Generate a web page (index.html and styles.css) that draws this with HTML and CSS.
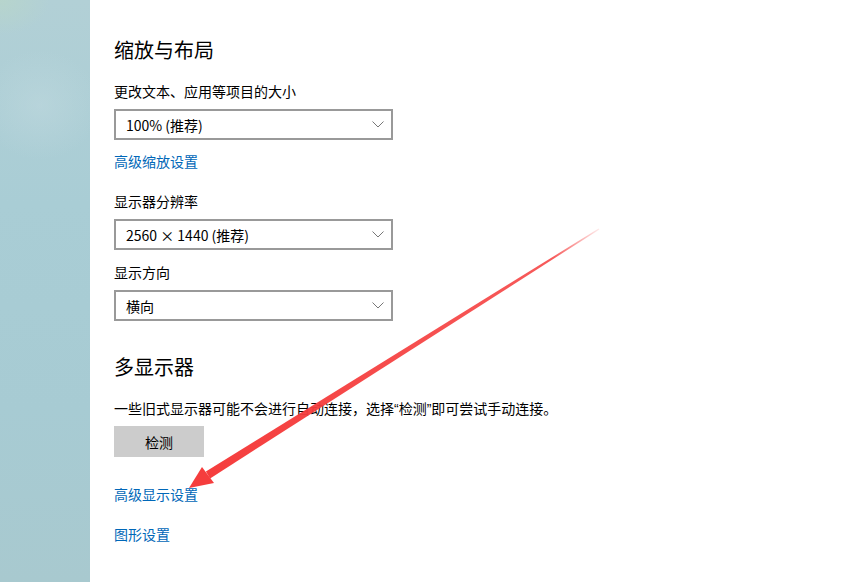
FILE: index.html
```html
<!DOCTYPE html>
<html lang="zh-CN">
<head>
<meta charset="utf-8">
<title>显示设置</title>
<link rel="stylesheet" href="styles.css">
</head>
<body>
<div class="window">
  <aside class="sidebar"></aside>
  <main class="content">
    <h2 class="heading">缩放与布局</h2>
    <div class="label first-label">更改文本、应用等项目的大小</div>
    <div class="select">
      <span class="select-text">100% (推荐)</span>
      <svg class="chevron" width="12" height="7" viewBox="0 0 12 7"><path d="M0.5 0.5 L6 6 L11.5 0.5" fill="none" stroke="#777" stroke-width="1"/></svg>
    </div>
    <a class="link link-scale" href="#">高级缩放设置</a>
    <div class="label label-res">显示器分辨率</div>
    <div class="select">
      <span class="select-text">2560 × 1440 (推荐)</span>
      <svg class="chevron" width="12" height="7" viewBox="0 0 12 7"><path d="M0.5 0.5 L6 6 L11.5 0.5" fill="none" stroke="#777" stroke-width="1"/></svg>
    </div>
    <div class="label label-orient">显示方向</div>
    <div class="select">
      <span class="select-text">横向</span>
      <svg class="chevron" width="12" height="7" viewBox="0 0 12 7"><path d="M0.5 0.5 L6 6 L11.5 0.5" fill="none" stroke="#777" stroke-width="1"/></svg>
    </div>
    <h2 class="heading heading-multi">多显示器</h2>
    <div class="label desc">一些旧式显示器可能不会进行自动连接，选择<span class="q">“</span>检测<span class="q">”</span>即可尝试手动连接。</div>
    <button class="btn" type="button">检测</button>
    <a class="link link-adv" href="#">高级显示设置</a>
    <a class="link link-gfx" href="#">图形设置</a>
  </main>
  <svg class="arrow" width="862" height="582" viewBox="0 0 862 582">
    <defs>
      <linearGradient id="fade" gradientUnits="userSpaceOnUse" x1="600" y1="229" x2="208" y2="475">
        <stop offset="0" stop-color="#f53d3d" stop-opacity="0.1"/>
        <stop offset="0.12" stop-color="#f53d3d" stop-opacity="0.85"/>
        <stop offset="1" stop-color="#f53d3d" stop-opacity="1"/>
      </linearGradient>
    </defs>
    <polygon points="599.4,229.5 598.6,228.5 205.9,471.6 210.1,478.4" fill="url(#fade)"/>
    <polygon points="189,488 202,467 214,483" fill="#f53d3d"/>
  </svg>
</div>
</body>
</html>
```
FILE: styles.css
```css
html, body {
  margin: 0;
  padding: 0;
  background: #fff;
}
body {
  font-family: "Noto Sans CJK SC", "Noto Sans", sans-serif;
  color: #000;
}
.window {
  position: relative;
  width: 862px;
  height: 582px;
  display: flex;
  overflow: hidden;
}
.sidebar {
  width: 90px;
  flex: none;
  background:
    radial-gradient(ellipse 50px 35px at 0px 0px, rgba(184,214,202,0.8), rgba(184,214,202,0)),
    radial-gradient(ellipse 60px 55px at 40px 105px, rgba(190,216,222,0.6), rgba(190,216,222,0)),
    linear-gradient(180deg, #b2d0d6 0%, #a9cdd5 35%, #a7cbd3 70%, #a8c9cf 100%);
}
.content {
  flex: 1;
  padding: 36px 0 0 24px;
  display: flex;
  flex-direction: column;
  align-items: flex-start;
}
.heading {
  margin: 0;
  font-size: 20px;
  line-height: 28px;
  font-weight: 400;
}
.label {
  font-size: 14px;
  line-height: 20px;
}
.q {
  font-family: "Liberation Sans", sans-serif;
}
.first-label { margin-top: 17px; }
.select {
  margin-top: 8px;
  box-sizing: border-box;
  width: 279px;
  height: 31px;
  border: 2px solid #999;
  display: flex;
  align-items: center;
  justify-content: space-between;
  padding: 0 7px 0 10px;
}
.select-text {
  font-size: 14px;
  line-height: 20px;
}
.chevron { display: block; }
.link {
  font-size: 14px;
  line-height: 20px;
  color: #0067b8;
  text-decoration: none;
}
.link-scale { margin-top: 11px; }
.label-res { margin-top: 20px; }
.label-orient { margin-top: 12px; }
.heading-multi { margin-top: 32px; }
.desc { margin-top: 17px; }
.btn {
  margin-top: 7px;
  width: 90px;
  height: 31px;
  border: none;
  background: #ccc;
  font-family: inherit;
  font-size: 14px;
  color: #000;
  padding: 0;
}
.link-adv { margin-top: 27px; }
.link-gfx { margin-top: 20px; }
.arrow {
  position: absolute;
  left: 0;
  top: 0;
  pointer-events: none;
}
```
